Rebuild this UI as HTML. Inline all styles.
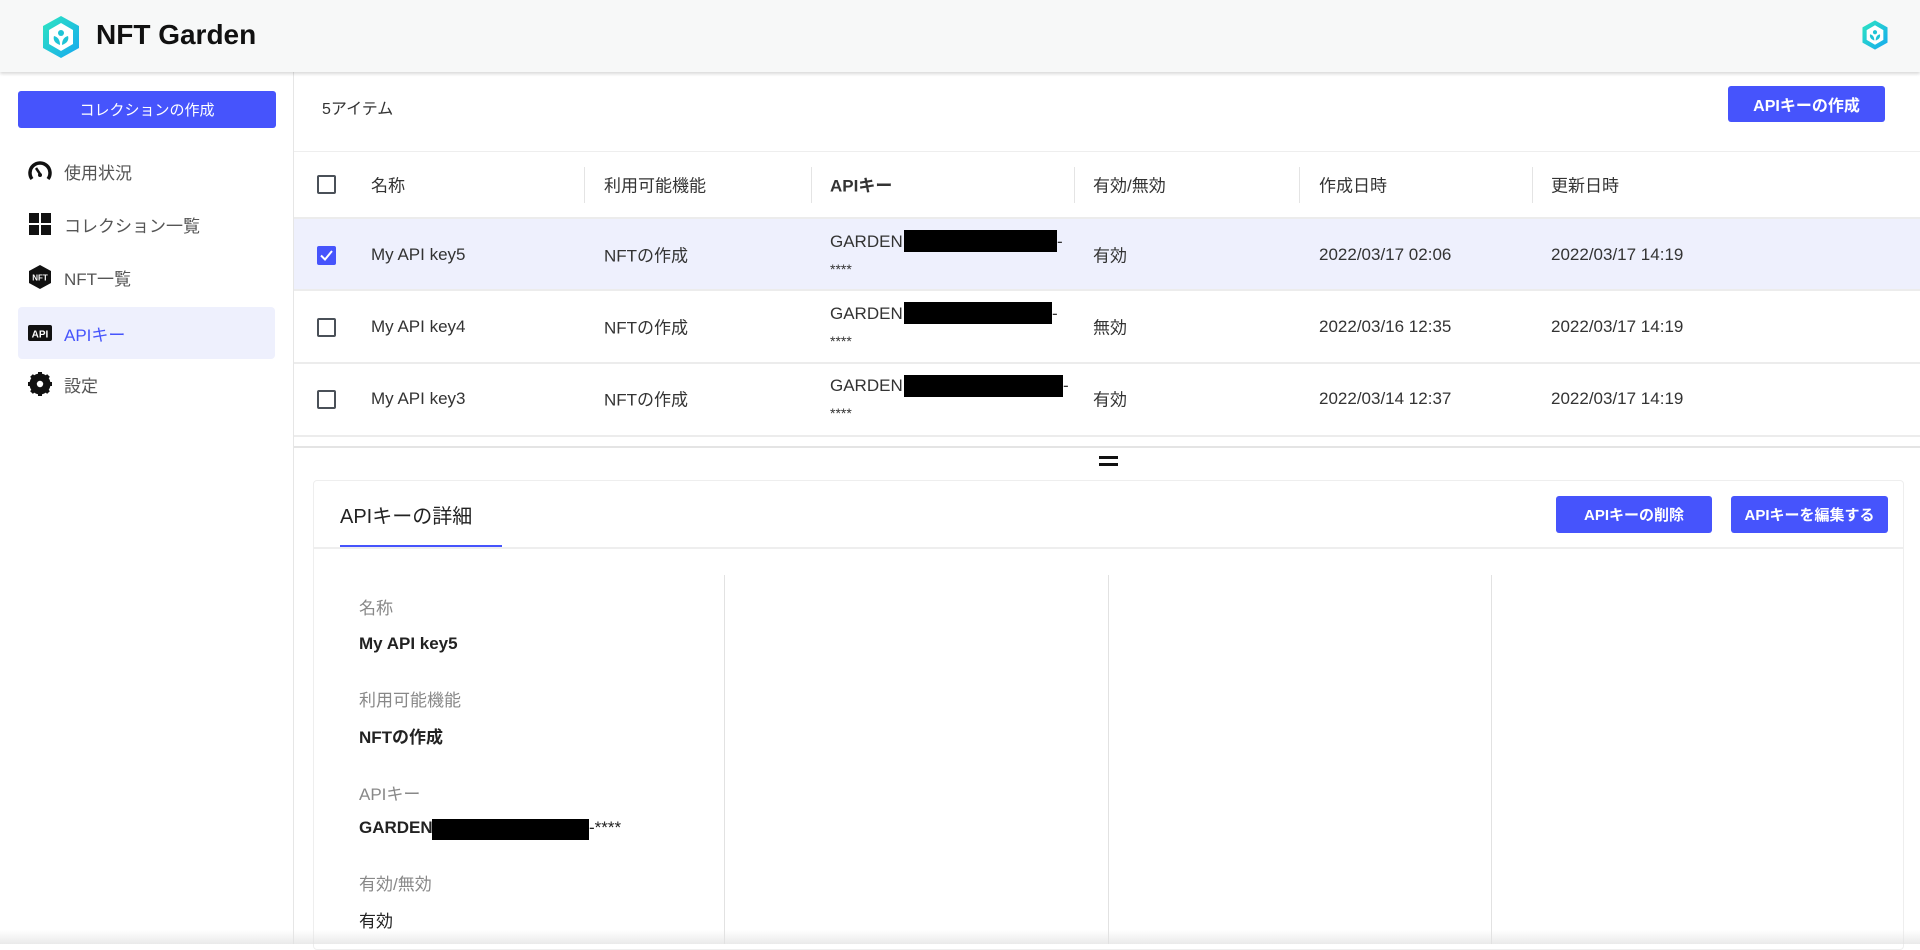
<!DOCTYPE html>
<html><head><meta charset="utf-8"><style>
*{box-sizing:border-box;margin:0;padding:0}
body{width:1920px;height:944px;overflow:hidden;background:#fff;font-family:"Liberation Sans","Noto Sans CJK JP",sans-serif;color:#333;position:relative}
.abs{position:absolute}
.hdr{left:0;top:0;width:1920px;height:72px;background:#f7f8f8;box-shadow:0 2px 3px rgba(0,0,0,.15);z-index:2}
.side{left:0;top:72px;width:294px;height:872px;border-right:1px solid #e6e6e6}
.btn{background:#4654fc;color:#fff;border-radius:3px;display:flex;align-items:center;justify-content:center;font-size:16px}
.mi{left:18px;width:257px;height:52px;display:flex;align-items:center;padding-left:10px;font-size:17px;color:#555;border-radius:4px}
.mi svg{margin-right:12px}
.cb{width:19px;height:19px;border:2px solid #4a5058;border-radius:2px}
.row{left:294px;width:1626px;border-bottom:2px solid #ececec}
.t{font-size:17px;color:#333;position:absolute;transform:translateY(-50%)}
.sep{width:1px;height:36px;background:#e4e4e4;top:167px}
.blk{background:#000;position:absolute}
.lab{font-size:17px;color:#888;left:359px}
.val{font-size:17px;color:#222;left:359px;font-weight:bold}
.vline{width:1px;background:#e2e2e2;top:575px;height:369px}
</style></head><body>
<div class="abs hdr">
  <svg class="abs" style="left:40px;top:14px" width="42" height="46" viewBox="0 0 42 46"><defs><linearGradient id="g" x1="0" y1="0" x2="1" y2="1"><stop offset="0" stop-color="#2ee6c0"/><stop offset="1" stop-color="#16a8f0"/></linearGradient></defs><path d="M21 2 L39 12 L39 34 L21 44 L3 34 L3 12 Z" fill="url(#g)"/><path d="M21 9 L33 16 L33 30 L21 37 L9 30 L9 16 Z" fill="#fff"/><path d="M20 31 C14 29 13 25 14 22 C18 23 20 26 20 31Z" fill="#1fc4d6"/><path d="M22 31 C28 29 29 25 28 22 C24 23 22 26 22 31Z" fill="#1fc4d6"/><circle cx="21" cy="19" r="3" fill="#1fc4d6"/></svg>
  <div class="abs" style="left:96px;top:19px;font-size:28px;font-weight:bold;color:#111">NFT Garden</div>
  <svg class="abs" style="left:1860px;top:19px" width="30" height="32" viewBox="0 0 42 46"><path d="M21 2 L39 12 L39 34 L21 44 L3 34 L3 12 Z" fill="url(#g)"/><path d="M21 9 L33 16 L33 30 L21 37 L9 30 L9 16 Z" fill="#fff"/><path d="M20 31 C14 29 13 25 14 22 C18 23 20 26 20 31Z" fill="#1fc4d6"/><path d="M22 31 C28 29 29 25 28 22 C24 23 22 26 22 31Z" fill="#1fc4d6"/><circle cx="21" cy="19" r="3" fill="#1fc4d6"/></svg>
</div>
<div class="abs side"></div>
<div class="abs btn" style="left:18px;top:91px;width:258px;height:37px;font-size:15px">コレクションの作成</div>
<div class="abs mi" style="top:145px"><svg width="24" height="22" viewBox="0 0 24 22"><path d="M4 19 A10 10 0 1 1 20 19" fill="none" stroke="#111" stroke-width="3.5"/><path d="M12 14 L8 8" stroke="#111" stroke-width="2.5"/><circle cx="12" cy="15" r="2" fill="#111"/></svg>使用状況</div>
<div class="abs mi" style="top:198px"><svg width="24" height="24" viewBox="0 0 24 24"><rect x="1" y="1" width="10" height="10" fill="#111"/><rect x="13" y="1" width="10" height="10" fill="#111"/><rect x="1" y="13" width="10" height="10" fill="#111"/><rect x="13" y="13" width="10" height="10" fill="#111"/></svg>コレクション一覧</div>
<div class="abs mi" style="top:251px"><svg width="24" height="26" viewBox="0 0 24 26"><path d="M12 1 L23 7 L23 19 L12 25 L1 19 L1 7Z" fill="#111"/><text x="12" y="16.5" font-size="8" fill="#fff" text-anchor="middle" font-weight="bold" font-family="Liberation Sans">NFT</text></svg>NFT一覧</div>
<div class="abs mi" style="top:307px;background:#eef0fd;color:#4654fc"><svg width="24" height="18" viewBox="0 0 24 18"><rect x="0" y="1" width="24" height="16" rx="2" fill="#111"/><text x="12" y="13.5" font-size="10" fill="#fff" text-anchor="middle" font-weight="bold" font-family="Liberation Sans">API</text></svg>APIキー</div>
<div class="abs mi" style="top:358px"><svg width="24" height="24" viewBox="0 0 24 24"><circle cx="12" cy="12" r="8" fill="none" stroke="#111" stroke-width="5"/><g stroke="#111" stroke-width="4"><path d="M12 0V24M0 12H24M3.5 3.5L20.5 20.5M20.5 3.5L3.5 20.5"/></g><circle cx="12" cy="12" r="7" fill="#111"/><circle cx="12" cy="12" r="3.2" fill="#fff"/></svg>設定</div>

<div class="abs" style="left:322px;top:95px;font-size:16px;color:#333">5アイテム</div>
<div class="abs btn" style="left:1728px;top:86px;width:157px;height:36px;font-size:16px;font-weight:bold">APIキーの作成</div>

<div class="abs row" style="top:151px;height:68px;border-top:1px solid #eee"></div>
<div class="abs cb" style="left:317px;top:175px"></div>
<div class="t" style="left:371px;top:184px">名称</div>
<div class="abs sep" style="left:584px"></div><div class="t" style="left:604px;top:184px">利用可能機能</div>
<div class="abs sep" style="left:811px"></div><div class="t" style="left:830px;top:184px;font-weight:bold">APIキー</div>
<div class="abs sep" style="left:1074px"></div><div class="t" style="left:1093px;top:184px">有効/無効</div>
<div class="abs sep" style="left:1299px"></div><div class="t" style="left:1319px;top:184px">作成日時</div>
<div class="abs sep" style="left:1532px"></div><div class="t" style="left:1551px;top:184px">更新日時</div>

<div class="abs row" style="top:219px;height:72px;background:#eef0fd"></div>
<div class="abs cb" style="left:317px;top:246px;background:#4654fc;border-color:#4654fc"><svg width="15" height="15" viewBox="0 0 15 15" style="display:block"><path d="M2 7.5 L6 11.5 L13 3" stroke="#fff" stroke-width="2" fill="none"/></svg></div>
<div class="t" style="left:371px;top:255px">My API key5</div><div class="t" style="left:604px;top:254px">NFTの作成</div>
<div class="t" style="left:830px;top:242px">GARDEN</div><div class="blk" style="left:904px;top:230px;width:153px;height:22px"></div><div class="t" style="left:1057px;top:242px">-</div><div class="t" style="left:830px;top:269px;font-size:14px">****</div>
<div class="t" style="left:1093px;top:254px">有効</div><div class="t" style="left:1319px;top:255px">2022/03/17 02:06</div><div class="t" style="left:1551px;top:255px">2022/03/17 14:19</div>

<div class="abs row" style="top:291px;height:73px"></div>
<div class="abs cb" style="left:317px;top:318px"></div>
<div class="t" style="left:371px;top:327px">My API key4</div><div class="t" style="left:604px;top:326px">NFTの作成</div>
<div class="t" style="left:830px;top:314px">GARDEN</div><div class="blk" style="left:904px;top:302px;width:148px;height:22px"></div><div class="t" style="left:1052px;top:314px">-</div><div class="t" style="left:830px;top:341px;font-size:14px">****</div>
<div class="t" style="left:1093px;top:326px">無効</div><div class="t" style="left:1319px;top:327px">2022/03/16 12:35</div><div class="t" style="left:1551px;top:327px">2022/03/17 14:19</div>

<div class="abs row" style="top:364px;height:73px"></div>
<div class="abs cb" style="left:317px;top:390px"></div>
<div class="t" style="left:371px;top:399px">My API key3</div><div class="t" style="left:604px;top:398px">NFTの作成</div>
<div class="t" style="left:830px;top:386px">GARDEN</div><div class="blk" style="left:904px;top:375px;width:159px;height:22px"></div><div class="t" style="left:1063px;top:386px">-</div><div class="t" style="left:830px;top:413px;font-size:14px">****</div>
<div class="t" style="left:1093px;top:398px">有効</div><div class="t" style="left:1319px;top:399px">2022/03/14 12:37</div><div class="t" style="left:1551px;top:399px">2022/03/17 14:19</div>

<div class="abs" style="left:294px;top:446px;width:1626px;height:2px;background:#e4e4e4"></div>
<div class="abs" style="left:1099px;top:456px;width:19px;height:3px;background:#111"></div>
<div class="abs" style="left:1099px;top:463px;width:19px;height:3px;background:#111"></div>

<div class="abs" style="left:313px;top:480px;width:1591px;height:470px;border:1px solid #eee;border-radius:4px"></div>
<div class="abs" style="left:313px;top:547px;width:1591px;height:2px;background:#eee"></div>
<div class="abs" style="left:340px;top:500px;font-size:20px;color:#222">APIキーの詳細</div>
<div class="abs" style="left:340px;top:545px;width:162px;height:2px;background:#4654fc"></div>
<div class="abs btn" style="left:1556px;top:496px;width:156px;height:37px;font-size:15px;font-weight:bold">APIキーの削除</div>
<div class="abs btn" style="left:1731px;top:496px;width:157px;height:37px;font-size:15px;font-weight:bold">APIキーを編集する</div>

<div class="abs vline" style="left:724px"></div>
<div class="abs vline" style="left:1108px"></div>
<div class="abs vline" style="left:1491px"></div>
<div class="abs lab" style="top:594px">名称</div>
<div class="abs val" style="top:634px">My API key5</div>
<div class="abs lab" style="top:686px">利用可能機能</div>
<div class="abs val" style="top:723px">NFTの作成</div>
<div class="abs lab" style="top:780px">APIキー</div>
<div class="abs val" style="top:818px">GARDEN</div>
<div class="blk" style="left:432px;top:819px;width:157px;height:21px"></div>
<div class="abs val" style="left:589px;top:818px;font-weight:normal">-****</div>
<div class="abs lab" style="top:870px">有効/無効</div>
<div class="abs val" style="top:907px;font-weight:normal">有効</div>
<div class="abs" style="left:0;top:930px;width:1920px;height:14px;background:linear-gradient(rgba(255,255,255,0),rgba(225,225,225,.7))"></div>
</body></html>
